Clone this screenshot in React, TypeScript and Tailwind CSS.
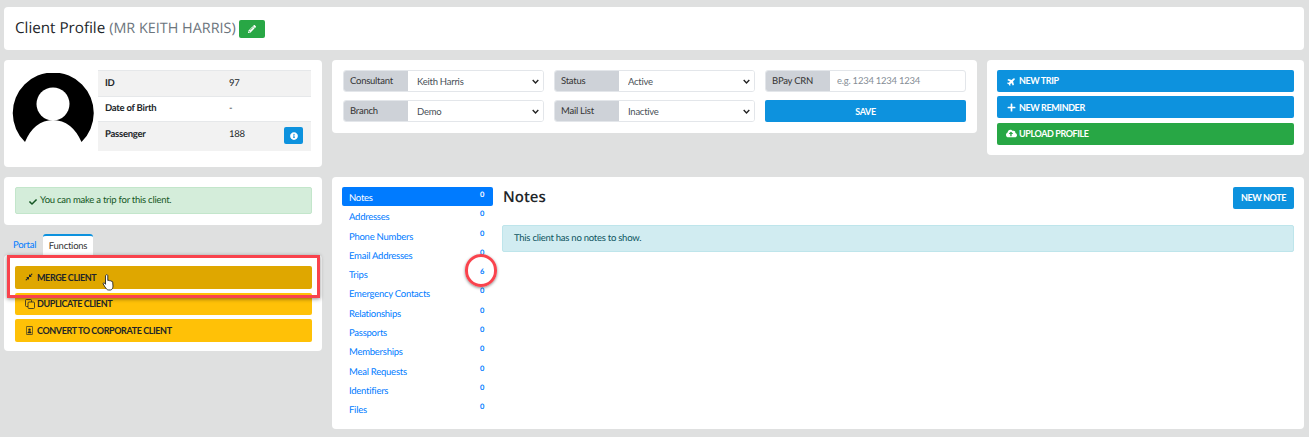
import { FaCheck, FaCloudUploadAlt, FaCompressAlt, FaInfoCircle, FaPencilAlt, FaPlane, FaPlus } from 'react-icons/fa'

const font = "font-['Lato','Open_Sans',sans-serif] [text-rendering:geometricPrecision] tracking-[-0.25px]"
const headingFont = "font-['Open_Sans','Noto_Sans',sans-serif] tracking-normal"

const sections = [
  { name: 'Notes', count: 0 },
  { name: 'Addresses', count: 0 },
  { name: 'Phone Numbers', count: 0 },
  { name: 'Email Addresses', count: 0 },
  { name: 'Trips', count: 6 },
  { name: 'Emergency Contacts', count: 0 },
  { name: 'Relationships', count: 0 },
  { name: 'Passports', count: 0 },
  { name: 'Memberships', count: 0 },
  { name: 'Meal Requests', count: 0 },
  { name: 'Identifiers', count: 0 },
  { name: 'Files', count: 0 },
]

function Card({ className, children }: { className?: string; children: React.ReactNode }) {
  return <div className={`bg-white rounded-[4px] ${className ?? ''}`}>{children}</div>
}

function Field({ label, value }: { label: string; value: string }) {
  return (
    <div className="flex h-[22px] w-[201px] rounded-[3px] border border-[#e3e6ea] overflow-hidden">
      <span className="w-[64px] shrink-0 bg-[#ced2d8] pl-[6px] text-[9.5px] leading-[22px] text-[#333]">{label}</span>
      <div className="relative flex-1 h-[20px]">
        <select
          defaultValue={value}
          className="block w-full h-[20px] pt-[1px] pb-0 appearance-none bg-white pl-[9px] text-[9.5px] leading-[20px] text-[#495057] outline-none"
        >
          <option>{value}</option>
        </select>
        <svg viewBox="0 0 10 6" className="absolute right-[4px] top-[8px] w-[7px] h-[5px]">
          <path d="M1 1l4 4 4-4" fill="none" stroke="#222" strokeWidth="2" />
        </svg>
      </div>
    </div>
  )
}

function WideButton({ color, icon, label }: { color: string; icon: React.ReactNode; label: string }) {
  return (
    <button className={`flex items-center h-[22px] w-full rounded-[2px] pl-[10px] text-white text-[9px] tracking-[-0.4px] font-bold ${color}`}>
      <span className="w-[12px] flex justify-start text-[9px]">{icon}</span>
      <span>{label}</span>
    </button>
  )
}

function FunctionButton({ color, icon, label }: { color: string; icon: React.ReactNode; label: string }) {
  return (
    <button className={`flex items-center h-[22.5px] w-full rounded-[2px] pl-[10px] text-[#212529] text-[9px] tracking-[-0.4px] font-bold ${color}`}>
      <span className="w-[12px] flex justify-start">{icon}</span>
      <span>{label}</span>
    </button>
  )
}

function Avatar() {
  return (
    <svg viewBox="0 0 82 72" className="w-[82px] h-[72px] shrink-0">
      <path d="M13 69A40.500 40.500 0 1 1 69.500 69Q60 47.500 41 47 22 47.500 13 69Z" fill="#000" />
      <circle cx="41" cy="31" r="16.500" fill="#fff" />
    </svg>
  )
}

export default function App() {
  return (
    <div className={`relative w-[1309px] h-[437px] overflow-hidden bg-[#dfe0e0] ${font} pt-[7px] px-[4px]`}>
      {/* Header */}
      <Card className="h-[43px] mr-[1px] flex items-center pl-[11px]">
        <h1 className={`text-[15.2px] text-[#212529] ${headingFont}`}>
          Client Profile <span className="text-[14.4px] text-[#6c757d]">(MR KEITH HARRIS)</span>
        </h1>
        <button className="ml-[3px] w-[26px] h-[18px] rounded-[2px] bg-[#28a745] text-white flex items-center justify-center">
          <FaPencilAlt className="text-[8px]" />
        </button>
      </Card>

      {/* Top row */}
      <div className="flex gap-[10px] mt-[10px] items-start">
        <Card className="w-[318px] h-[107px] flex pl-[8px] pt-[10px] pr-[11px]">
          <div className="pt-[3px]"><Avatar /></div>
          <table className="ml-[4px] w-[213px] h-[80px] text-[9.5px] text-[#212529] border-collapse">
            <tbody>
              <tr className="bg-[#f2f2f2] border-t border-[#e6e8ea] h-[26px]">
                <td className="pl-[7px] pt-[2px] font-bold w-[131px]">ID</td>
                <td className="pt-[2px]">97</td>
              </tr>
              <tr className="border-t border-[#e6e8ea] h-[25px]">
                <td className="pl-[7px] pt-[1px] font-bold">Date of Birth</td>
                <td className="pt-[1px]">-</td>
              </tr>
              <tr className="bg-[#f2f2f2] border-t border-[#e6e8ea] h-[29px]">
                <td className="pl-[7px] font-bold align-top pt-[6px]">Passenger</td>
                <td className="align-top pt-[6px] relative">
                  188
                  <button className="absolute right-[8px] top-[5px] w-[19px] h-[17px] rounded-[2px] bg-[#0d92de] text-white flex items-center justify-center">
                    <FaInfoCircle className="text-[8px]" />
                  </button>
                </td>
              </tr>
            </tbody>
          </table>
        </Card>

        <Card className="w-[645px] h-[73px] pt-[10px] pl-[11px]">
          <div className="flex gap-[10px]">
            <Field label="Consultant" value="Keith Harris" />
            <Field label="Status" value="Active" />
            <div className="flex h-[22px] w-[201px] rounded-[3px] border border-[#e3e6ea] overflow-hidden">
              <span className="w-[64px] shrink-0 bg-[#ced2d8] pl-[6px] text-[9.5px] leading-[22px] text-[#333]">BPay CRN</span>
              <input placeholder="e.g. 1234 1234 1234" className="flex-1 min-w-0 pl-[7px] pt-[1px] text-[9.5px] outline-none placeholder:text-[#868e96]" />
            </div>
          </div>
          <div className="flex gap-[10px] mt-[8px]">
            <Field label="Branch" value="Demo" />
            <Field label="Mail List" value="Inactive" />
            <button className="w-[201px] h-[22px] pt-[1px] rounded-[2px] bg-[#0d92de] text-white text-[9px] tracking-[-0.4px] font-bold">SAVE</button>
          </div>
        </Card>

        <Card className="w-[317px] h-[95px] pt-[10px] px-[10px] flex flex-col gap-[4.4px]">
          <WideButton color="bg-[#0d92de]" icon={<FaPlane className="-rotate-45" />} label="NEW TRIP" />
          <WideButton color="bg-[#0d92de]" icon={<FaPlus />} label="NEW REMINDER" />
          <WideButton color="bg-[#28a745]" icon={<FaCloudUploadAlt className="text-[11px] -ml-[1px]" />} label="UPLOAD PROFILE" />
        </Card>
      </div>

      {/* Bottom row */}
      <div className="flex gap-[10px] mt-[10px] items-start">
        <div className="w-[318px]">
          <Card className="h-[48px] pt-[10px] pl-[11px] pr-[10px]">
            <div className="h-[27px] rounded-[2px] bg-[#d4edda] border border-[#c3e6cb] flex items-center pl-[13px] pt-[2px] text-[9.5px] text-[#155724]">
              <FaCheck className="text-[8px] mr-[3px]" />
              You can make a trip for this client.
            </div>
          </Card>
          <div className="flex mt-[9px] pl-[5px] h-[21px] text-[9.5px]">
            <span className="w-[34px] pt-[5px] pl-[4px] text-[#007bff]">Portal</span>
            <span className="w-[50px] bg-white rounded-t-[3px] border-t-2 border-[#0d92de] pt-[4px] text-center text-[#333]">Functions</span>
          </div>
          <Card className="h-[96px] pt-[11px] pl-[11px] pr-[10px] flex flex-col gap-[4px]">
            <FunctionButton color="bg-[#dfa700]" icon={<FaCompressAlt className="text-[8px]" />} label="MERGE CLIENT" />
            <FunctionButton color="bg-[#ffc107]" icon={<DuplicateIcon />} label="DUPLICATE CLIENT" />
            <FunctionButton color="bg-[#ffc107]" icon={<PortraitIcon />} label="CONVERT TO CORPORATE CLIENT" />
          </Card>
        </div>

        <Card className="w-[972px] h-[252px] flex pt-[10px] pl-[10px] pr-[10px]">
          <ul className="w-[151px] shrink-0 text-[9.5px]">
            {sections.map((s, i) => (
              <li
                key={s.name}
                className={`flex justify-between h-[19.3px] pl-[7px] pr-[9px] leading-[21px] ${
                  i === 0 ? 'bg-[#007bff] text-white rounded-[2px]' : 'text-[#007bff]'
                }`}
              >
                <span className="pt-[1px]">{s.name}</span>
                <span className="text-[7.5px] font-bold leading-[15px]">{s.count}</span>
              </li>
            ))}
          </ul>
          <div className="flex-1 ml-[9px]">
            <div className="flex justify-between items-start h-[38px]">
              <h2 className={`pl-[1px] text-[15px] font-semibold leading-[20px] text-[#212529] ${headingFont}`}>Notes</h2>
              <button className="w-[61px] h-[22px] rounded-[2px] bg-[#0d92de] text-white text-[9px] tracking-[-0.4px] font-bold">NEW NOTE</button>
            </div>
            <div className="h-[27px] rounded-[2px] bg-[#d1ecf1] border border-[#bee5eb] flex items-center pl-[11px] pt-[2px] text-[9.5px] text-[#0c5460]">
              This client has no notes to show.
            </div>
          </div>
        </Card>
      </div>

      {/* Annotations on top of the screenshot */}
      <div className="absolute left-[7px] top-[255px] w-[313px] h-[43px] border-[3px] border-[#f9434d] shadow-[0_1px_4px_rgba(0,0,0,0.45)]" />
      <div className="absolute left-[465px] top-[254px] w-[32px] h-[33px] rounded-full border-[3px] border-[#f9434d] shadow-[0_1px_3px_rgba(0,0,0,0.45)]" />
      <svg viewBox="0 0 14 18" className="absolute left-[102px] top-[273px] w-[14px] h-[19px]">
        <path
          d="M4 1.500c.8-.8 1.800-.3 1.800.7V7l.3-.2c.7-.3 1.300 0 1.400.5.7-.4 1.400-.1 1.600.5.8-.3 1.500.1 1.600.8l.3 4c0 1.800-1 3.900-2.500 3.900H6.500C5 16.500 4 15 3 13.500L1.200 10.500C.8 9.700 1.800 8.800 2.500 9.500L3.500 10.800V2.500c0-.4.200-.8.500-1Z"
          fill="#fff"
          stroke="#222"
          strokeWidth="0.9"
        />
      </svg>
    </div>
  )
}

function DuplicateIcon() {
  return (
    <svg viewBox="0 0 10 10" className="w-[10px] h-[10px]" fill="none" stroke="#212529" strokeWidth="0.8">
      <rect x="3" y="3" width="6.500" height="6.500" rx="1" />
      <path d="M3 7.500H1.500a1 1 0 0 1-1-1V1.500a1 1 0 0 1 1-1h4a1 1 0 0 1 1 1V3" />
    </svg>
  )
}

function PortraitIcon() {
  return (
    <svg viewBox="0 0 8 10" className="w-[7px] h-[9px] ml-[1px]">
      <rect x="0.400" y="0.400" width="7.200" height="9.200" rx="0.800" fill="none" stroke="#212529" strokeWidth="0.8" />
      <circle cx="4" cy="4" r="1.400" fill="#212529" />
      <path d="M1.700 8c0-1.500 1-2.200 2.300-2.200S6.300 6.500 6.300 8z" fill="#212529" />
    </svg>
  )
}
